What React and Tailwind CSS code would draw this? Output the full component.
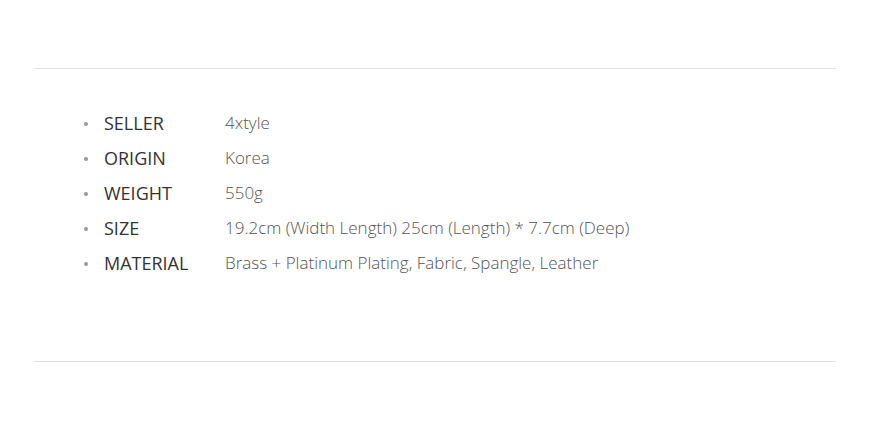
const specs = [
  { label: 'SELLER', value: '4xtyle' },
  { label: 'ORIGIN', value: 'Korea' },
  { label: 'WEIGHT', value: '550g' },
  { label: 'SIZE', value: '19.2cm (Width Length) 25cm (Length) * 7.7cm (Deep)' },
  { label: 'MATERIAL', value: 'Brass + Platinum Plating, Fabric, Spangle, Leather' },
];

export default function App() {
  return (
    <div className="min-h-screen bg-white pt-[68px] px-[34px] w-[873px]" style={{ fontFamily: '"Open Sans", sans-serif' }}>
      <div className="border-t border-b border-[#e2e2e2] w-[802px] pt-[37px] pb-[80px]">
        <ul className="pl-[50px]">
          {specs.map((s) => (
            <li key={s.label} className="flex items-center h-[35px]">
              <span className="w-[4px] h-[4px] rounded-full bg-[#999] mr-[16px]" />
              <span className="w-[121px] text-[18px] text-[#333]">{s.label}</span>
              <span className="text-[17px] text-[#555] font-light -mt-[1px]">{s.value}</span>
            </li>
          ))}
        </ul>
      </div>
    </div>
  );
}
